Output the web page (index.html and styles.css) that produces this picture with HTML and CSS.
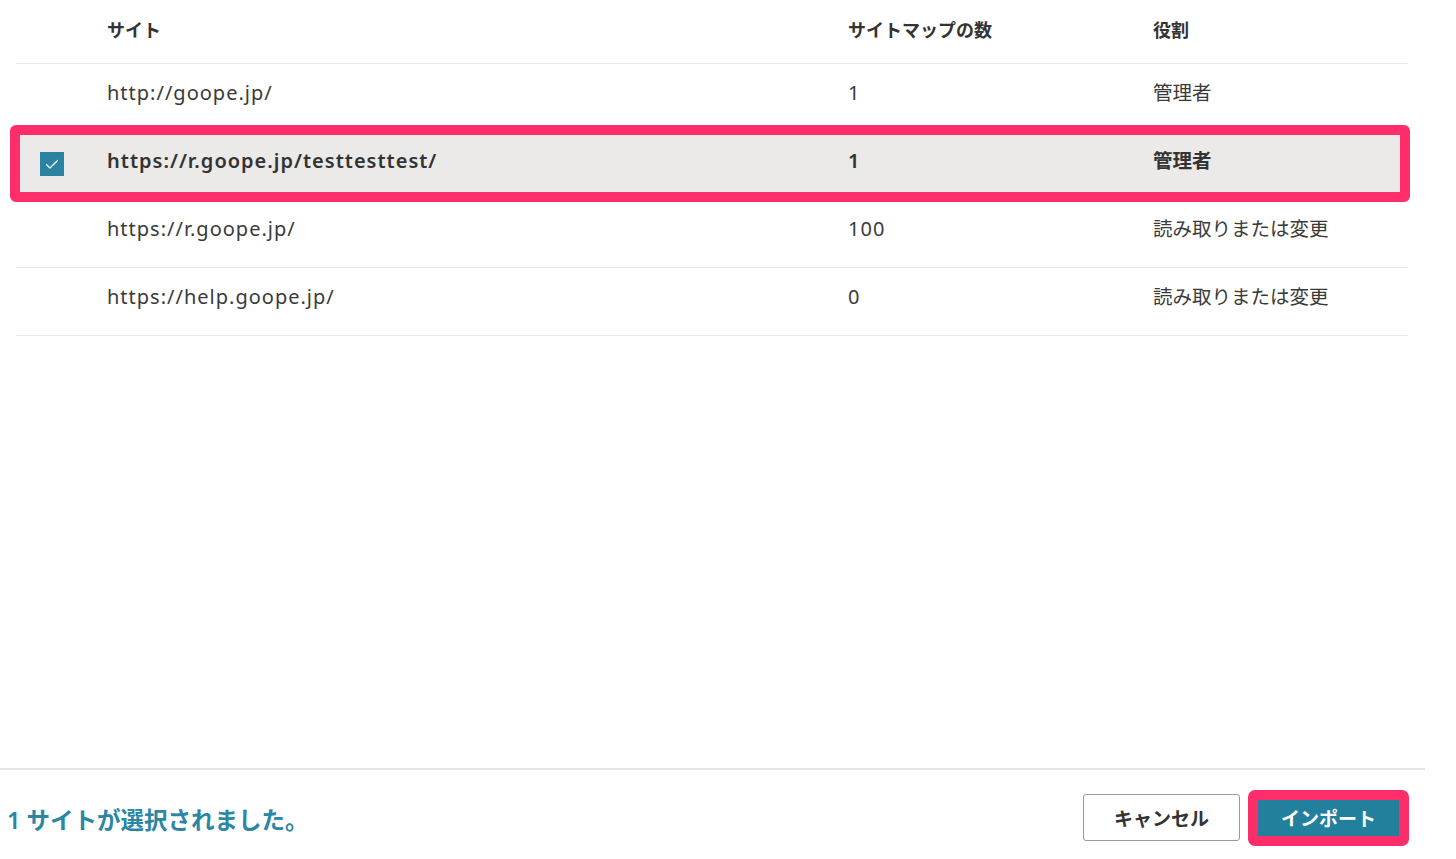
FILE: index.html
```html
<!DOCTYPE html>
<html lang="ja">
<head>
<meta charset="utf-8">
<link rel="stylesheet" href="styles.css">
</head>
<body>
<div class="page">
  <div class="table">
    <div class="row head">
      <div class="cell"></div>
      <div class="cell">サイト</div>
      <div class="cell">サイトマップの数</div>
      <div class="cell">役割</div>
    </div>
    <div class="row">
      <div class="cell"></div>
      <div class="cell latin">http://goope.jp/</div>
      <div class="cell latin">1</div>
      <div class="cell">管理者</div>
    </div>
    <div class="row selected">
      <div class="cell check-cell">
        <span class="checkbox">
          <svg width="24" height="24" viewBox="0 0 24 24"><path d="M6.5 12.5 L10 16 L17.5 8.5" fill="none" stroke="#fff" stroke-width="1.3" stroke-linecap="round" stroke-linejoin="round"/></svg>
        </span>
      </div>
      <div class="cell latin">https://r.goope.jp/testtesttest/</div>
      <div class="cell latin">1</div>
      <div class="cell">管理者</div>
      <div class="highlight"></div>
    </div>
    <div class="row">
      <div class="cell"></div>
      <div class="cell latin">https://r.goope.jp/</div>
      <div class="cell latin">100</div>
      <div class="cell">読み取りまたは変更</div>
    </div>
    <div class="row">
      <div class="cell"></div>
      <div class="cell latin">https://help.goope.jp/</div>
      <div class="cell latin">0</div>
      <div class="cell">読み取りまたは変更</div>
    </div>
  </div>
  <div class="spacer"></div>
  <div class="footer">
    <div class="status">1 サイトが選択されました。</div>
    <div class="actions">
      <button class="btn cancel">キャンセル</button>
      <button class="btn import">インポート</button>
    </div>
  </div>
</div>
</body>
</html>
```
FILE: styles.css
```css
html, body {
  margin: 0;
  padding: 0;
  background: #fff;
}
body {
  font-family: "Noto Sans", "Noto Sans CJK JP", sans-serif;
  color: #3a3a3a;
}
.page {
  height: 859px;
  display: flex;
  flex-direction: column;
  overflow: hidden;
}
.table {
  margin-left: 16px;
  width: 1392px;
}
.row {
  position: relative;
  display: grid;
  grid-template-columns: 91px 741px 305px 1fr;
  align-items: center;
  border-bottom: 1px solid #e9e9e9;
  font-size: 19.5px;
  line-height: 28px;
  padding-bottom: 10px;
  box-sizing: border-box;
  height: 68px;
}
.row.head {
  height: 64px;
  font-weight: bold;
  font-size: 18px;
  color: #333;
  padding-bottom: 4px;
}
.row.selected {
  background: #ebeae8;
  font-weight: 600;
  color: #333;
}
.cell {
  white-space: nowrap;
}
.cell.latin {
  font-size: 20px;
  letter-spacing: 1px;
}
.check-cell {
  display: flex;
  padding-left: 24px;
}
.checkbox {
  display: block;
  width: 24px;
  height: 24px;
  background: #2a83a1;
  margin-top: 6px;
}
.checkbox svg {
  display: block;
}
.highlight {
  position: absolute;
  left: -6px;
  right: -2px;
  top: -7px;
  bottom: -3px;
  border: 10px solid #ff2d6a;
  border-radius: 6px;
  pointer-events: none;
}
.spacer {
  flex: 1;
}
.footer {
  width: 1425px;
  height: 91px;
  box-sizing: border-box;
  border-top: 2px solid #e6e6e6;
  display: flex;
  align-items: center;
  justify-content: space-between;
  padding: 0 16px 0 7px;
}
.status {
  color: #2a86a3;
  font-size: 23.5px;
  font-weight: 600;
  line-height: 32px;
  margin-top: 10px;
}
.actions {
  display: flex;
  align-items: center;
  gap: 8px;
  margin-top: 6px;
}
.btn {
  font-family: "Noto Sans CJK JP", "Noto Sans", sans-serif;
  font-weight: bold;
  font-size: 19px;
  box-sizing: border-box;
  cursor: pointer;
}
.cancel {
  width: 157px;
  height: 47px;
  background: #fff;
  border: 1px solid #9a9a9a;
  border-radius: 3px;
  color: #333;
}
.import {
  width: 161px;
  height: 56px;
  background: #23809d;
  border: 10px solid #ff2d6a;
  border-radius: 7px;
  color: #fff;
}
```
